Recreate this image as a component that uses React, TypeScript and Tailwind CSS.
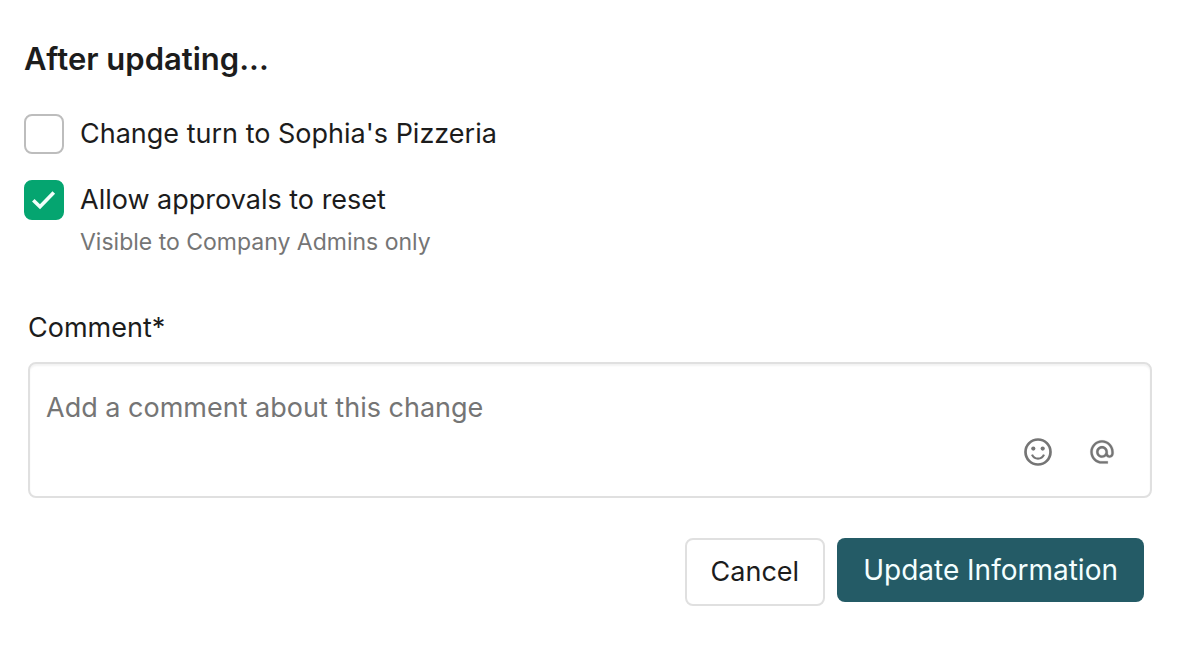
import { useState } from "react";

type CheckOptionProps = {
  id: string;
  label: string;
  hint?: string;
  checked: boolean;
  onChange: (checked: boolean) => void;
};

function CheckOption({ id, label, hint, checked, onChange }: CheckOptionProps) {
  return (
    <div className="flex items-start gap-4">
      <span className="grid size-10 shrink-0">
        <input
          id={id}
          type="checkbox"
          checked={checked}
          onChange={(e) => onChange(e.target.checked)}
          aria-describedby={hint ? `${id}-hint` : undefined}
          className="col-start-1 row-start-1 size-10 appearance-none rounded-lg border-2 border-[#bdbdbd] bg-white checked:border-[#05a570] checked:bg-[#05a570]"
        />
        {checked && (
          <svg
            viewBox="0 0 40 40"
            className="pointer-events-none col-start-1 row-start-1 size-10"
            fill="none"
            stroke="#f2fffa"
            strokeWidth="3.6"
            aria-hidden="true"
          >
            <path d="M9.300 20.200 16 26.800 29.800 12.500" />
          </svg>
        )}
      </span>
      <div>
        <label htmlFor={id} className="block text-[27px] leading-10">
          {label}
        </label>
        {hint && (
          <p id={`${id}-hint`} className="mt-1 text-[23px] leading-9 text-[#757575]">
            {hint}
          </p>
        )}
      </div>
    </div>
  );
}

function SmileIcon() {
  return (
    <svg viewBox="0 0 28 28" className="size-7" fill="none" stroke="currentColor" strokeWidth="2.7" aria-hidden="true">
      <circle cx="14" cy="14" r="12.5" />
      <circle cx="9.3" cy="10.6" r="2.1" fill="currentColor" stroke="none" />
      <circle cx="18.7" cy="10.6" r="2.1" fill="currentColor" stroke="none" />
      <path d="M8 16.600C9.200 19.200 11.400 20.600 14 20.600s4.800-1.400 6-4" strokeWidth="2.200" />
    </svg>
  );
}

function MentionIcon() {
  return (
    <svg viewBox="0 0 24 24" className="size-7" fill="currentColor" stroke="currentColor" strokeWidth="0.2" aria-hidden="true">
      <path d="M12 1.950c-5.520 0-10 4.480-10 10s4.480 10 10 10h5v-2h-5c-4.340 0-8-3.660-8-8s3.660-8 8-8 8 3.660 8 8v1.430c0 .79-.71 1.570-1.500 1.570s-1.500-.78-1.500-1.570v-1.430c0-2.760-2.240-5-5-5s-5 2.240-5 5 2.240 5 5 5c1.380 0 2.640-.56 3.540-1.470.65.89 1.770 1.470 2.960 1.470 1.970 0 3.500-1.600 3.500-3.570v-1.430c0-5.520-4.480-10-10-10zm0 13c-1.660 0-3-1.340-3-3s1.340-3 3-3 3 1.340 3 3-1.340 3-3 3z" />
    </svg>
  );
}

export default function App() {
  const [changeTurn, setChangeTurn] = useState(false);
  const [resetApprovals, setResetApprovals] = useState(true);
  const [comment, setComment] = useState("");

  return (
    <form
      onSubmit={(e) => e.preventDefault()}
      className="min-h-screen bg-white px-6 py-9 font-['Inter','Liberation_Sans',sans-serif] text-[#1c1c1c]"
    >
      <h2 className="text-[31px] leading-[46px] font-semibold">After updating...</h2>

      <div className="mt-8 flex flex-col gap-[26px]">
        <CheckOption
          id="change-turn"
          label="Change turn to Sophia's Pizzeria"
          checked={changeTurn}
          onChange={setChangeTurn}
        />
        <CheckOption
          id="reset-approvals"
          label="Allow approvals to reset"
          hint="Visible to Company Admins only"
          checked={resetApprovals}
          onChange={setResetApprovals}
        />
      </div>

      <div className="mt-12 mr-1.5 ml-1">
        <label htmlFor="comment" className="block text-[27px] leading-10">
          Comment*
        </label>
        <div className="mt-3.5 flex flex-col rounded-lg border-2 border-[#e0e0e0] pt-6 pr-[34px] pb-[30px] pl-4 shadow-[inset_0_2px_2px_#f3f3f3]">
          <textarea
            id="comment"
            rows={1}
            value={comment}
            onChange={(e) => setComment(e.target.value)}
            placeholder="Add a comment about this change"
            className="block w-full resize-none overflow-hidden bg-transparent text-[27px] leading-10 outline-none placeholder:text-[#757575]"
          />
          <div className="mt-2.5 flex justify-end gap-9 text-[#757575]">
            <button type="button" aria-label="Add emoji">
              <SmileIcon />
            </button>
            <button type="button" aria-label="Mention someone">
              <MentionIcon />
            </button>
          </div>
        </div>
      </div>

      <div className="mt-10 mr-3.5 flex items-start justify-end gap-3">
        <button
          type="button"
          className="rounded-lg border-2 border-[#e0e0e0] bg-white px-6 py-3 text-[27px] leading-10"
        >
          Cancel
        </button>
        <button
          type="submit"
          className="rounded-lg bg-[#245b66] px-[26px] py-3 text-[28px] leading-10 text-[#f4ffff]"
        >
          Update Information
        </button>
      </div>
    </form>
  );
}
